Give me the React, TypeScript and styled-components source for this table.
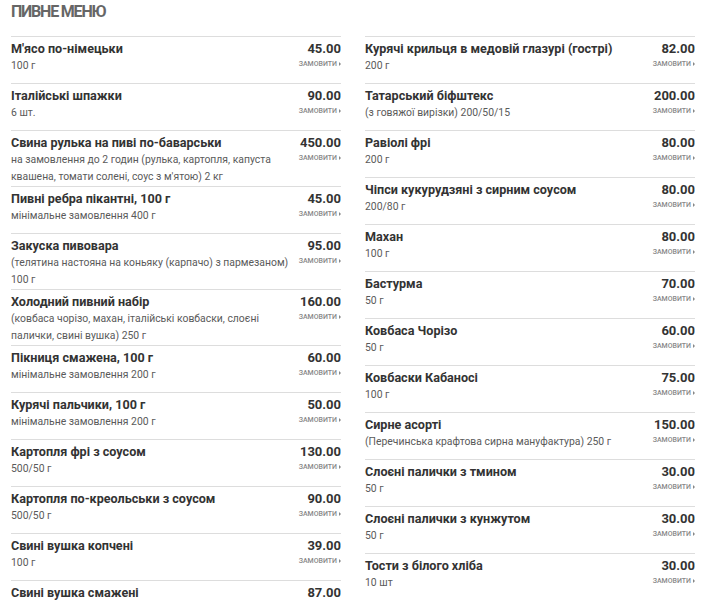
import { createGlobalStyle, styled } from "styled-components";

type MenuItemType = {
  title: string;
  desc: string;
  price: string;
};

const leftItems: MenuItemType[] = [
  { title: "М'ясо по-німецьки", desc: "100 г", price: "45.00" },
  { title: "Італійські шпажки", desc: "6 шт.", price: "90.00" },
  {
    title: "Свина рулька на пиві по-баварськи",
    desc: "на замовлення до 2 годин (рулька, картопля, капуста квашена, томати солені, соус з м'ятою) 2 кг",
    price: "450.00",
  },
  { title: "Пивні ребра пікантні, 100 г", desc: "мінімальне замовлення 400 г", price: "45.00" },
  {
    title: "Закуска пивовара",
    desc: "(телятина настояна на коньяку (карпачо) з пармезаном) 100 г",
    price: "95.00",
  },
  {
    title: "Холодний пивний набір",
    desc: "(ковбаса чорізо, махан, італійські ковбаски, слоєні палички, свині вушка) 250 г",
    price: "160.00",
  },
  { title: "Пікниця смажена, 100 г", desc: "мінімальне замовлення 200 г", price: "60.00" },
  { title: "Курячі пальчики, 100 г", desc: "мінімальне замовлення 200 г", price: "50.00" },
  { title: "Картопля фрі з соусом", desc: "500/50 г", price: "130.00" },
  { title: "Картопля по-креольськи з соусом", desc: "500/50 г", price: "90.00" },
  { title: "Свині вушка копчені", desc: "100 г", price: "39.00" },
  { title: "Свині вушка смажені", desc: "100 г", price: "87.00" },
];

const rightItems: MenuItemType[] = [
  { title: "Курячі крильця в медовій глазурі (гострі)", desc: "200 г", price: "82.00" },
  { title: "Татарський біфштекс", desc: "(з говяжої вирізки) 200/50/15", price: "200.00" },
  { title: "Равіолі фрі", desc: "200 г", price: "80.00" },
  { title: "Чіпси кукурудзяні з сирним соусом", desc: "200/80 г", price: "80.00" },
  { title: "Махан", desc: "100 г", price: "80.00" },
  { title: "Бастурма", desc: "50 г", price: "70.00" },
  { title: "Ковбаса Чорізо", desc: "50 г", price: "60.00" },
  { title: "Ковбаски Кабаносі", desc: "100 г", price: "75.00" },
  {
    title: "Сирне асорті",
    desc: "(Перечинська крафтова сирна мануфактура) 250 г",
    price: "150.00",
  },
  { title: "Слоєні палички з тмином", desc: "50 г", price: "30.00" },
  { title: "Слоєні палички з кунжутом", desc: "50 г", price: "30.00" },
  { title: "Тости з білого хліба", desc: "10 шт", price: "30.00" },
];

const GlobalStyle = createGlobalStyle`
  body {
    margin: 0;
    background: #fff;
    font-family: Roboto, "Noto Sans", sans-serif;
    color: #333;
  }
`;

const Page = styled.div`
  padding: 0 12px 0 11px;
  height: 600px;
  overflow: hidden;
`;

const Heading = styled.h2`
  margin: 0;
  padding: 2px 0 14px;
  font-size: 16px;
  line-height: 20px;
  font-weight: 700;
  letter-spacing: -1.2px;
  color: #666;
  text-transform: uppercase;
`;

const Columns = styled.div`
  display: grid;
  grid-template-columns: 330px 330px;
  column-gap: 24px;
  align-items: start;
`;

const Column = styled.div`
  display: flex;
  flex-direction: column;
`;

const Row = styled.div`
  box-sizing: border-box;
  display: flex;
  justify-content: space-between;
  gap: 6px;
  min-height: 47px;
  padding: 3px 0 1px;
  border-top: 1px solid #ddd;
`;

const Info = styled.div`
  flex: 1;
  min-width: 0;
`;

const Title = styled.div`
  font-size: 12.6px;
  line-height: 17px;
  font-weight: 700;
  color: #333;
`;

const Desc = styled.div`
  font-size: 10.4px;
  line-height: 17px;
  color: #5a5a5a;
`;

const Side = styled.div`
  display: flex;
  flex-direction: column;
  align-items: flex-end;
  flex: 0 0 auto;
`;

const Price = styled.div`
  font-size: 13px;
  line-height: 17px;
  font-weight: 700;
  color: #333;
`;

const Order = styled.a`
  display: flex;
  align-items: center;
  gap: 2px;
  margin-top: 2px;
  font-size: 7px;
  line-height: 10px;
  font-weight: 500;
  color: #888;
  text-transform: uppercase;
  text-decoration: none;
  cursor: pointer;
`;

const Arrow = styled.span`
  width: 0;
  height: 0;
  border-top: 2px solid transparent;
  border-bottom: 2px solid transparent;
  border-left: 2.5px solid #888;
`;

const MenuRow = ({ item }: { item: MenuItemType }) => (
  <Row>
    <Info>
      <Title>{item.title}</Title>
      <Desc>{item.desc}</Desc>
    </Info>
    <Side>
      <Price>{item.price}</Price>
      <Order>
        Замовити
        <Arrow />
      </Order>
    </Side>
  </Row>
);

const App = () => {
  return (
    <Page>
      <GlobalStyle />
      <Heading>Пивне меню</Heading>
      <Columns>
        <Column>
          {leftItems.map((item) => (
            <MenuRow key={item.title} item={item} />
          ))}
        </Column>
        <Column>
          {rightItems.map((item) => (
            <MenuRow key={item.title} item={item} />
          ))}
        </Column>
      </Columns>
    </Page>
  );
};

export default App;
